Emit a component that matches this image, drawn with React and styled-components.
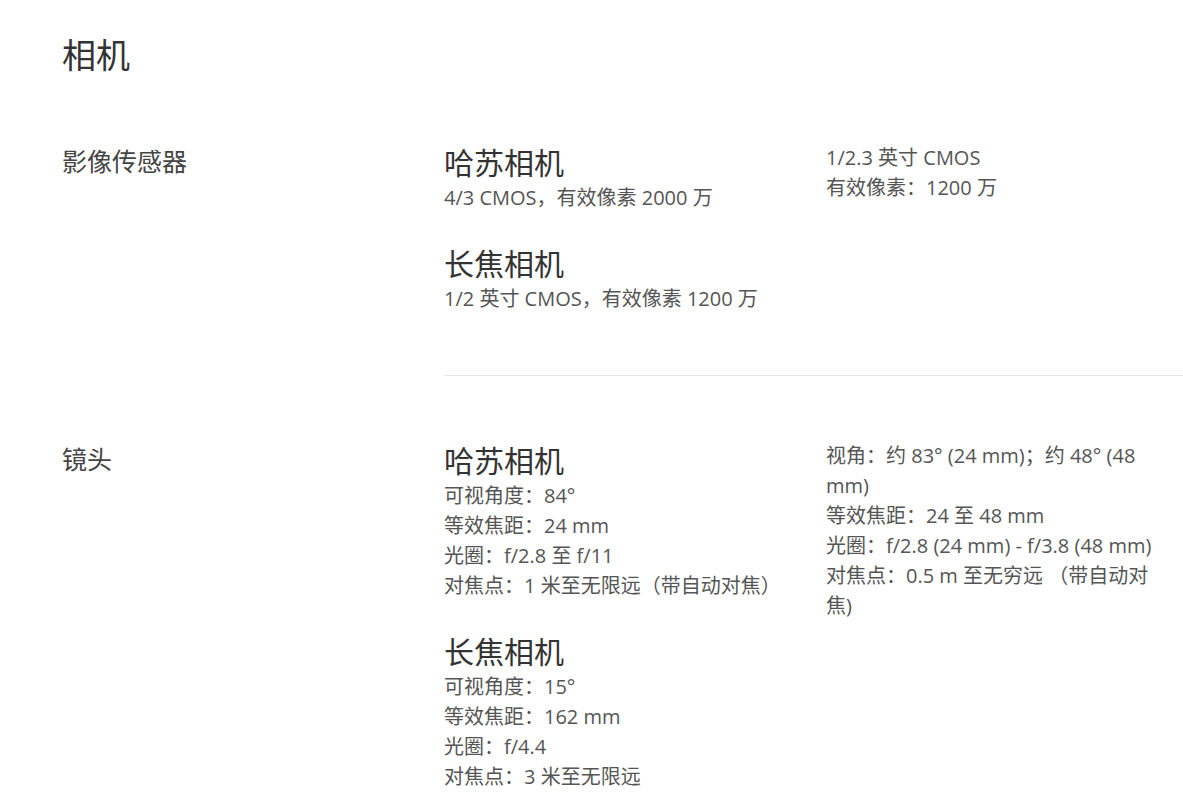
import React from 'react';
import styled, { createGlobalStyle } from 'styled-components';

const GlobalStyle = createGlobalStyle`
    html, body {
        margin: 0;
        padding: 0;
        background: #fff;
    }
    body {
        font-family: "Open Sans", "Noto Sans CJK SC", sans-serif;
        -webkit-font-smoothing: antialiased;
    }
`;

const Page = styled.div`
    padding: 32px 0 0 62px;
    color: #555;
`;

const Title = styled.h1`
    margin: 0 0 65px;
    font-size: 34px;
    line-height: 46px;
    font-weight: 400;
    color: #333;
`;

const Row = styled.section`
    display: flex;
    & + & {
        margin-top: 65px;
    }
`;

const Label = styled.h2`
    flex: 0 0 382px;
    margin: 0;
    font-size: 25px;
    line-height: 36px;
    font-weight: 400;
    color: #444;
`;

const Body = styled.div`
    flex: 1;
    display: flex;
    padding-bottom: ${(p) => (p.$last ? '0' : '61px')};
    border-bottom: ${(p) => (p.$last ? 'none' : '1px solid #e6e6e6')};
`;

const Column = styled.div`
    flex: 0 0 ${(p) => p.$width}px;
    display: flex;
    flex-direction: column;
    gap: 31px;
`;

const Block = styled.div``;

const Heading = styled.h3`
    margin: 0;
    font-size: 30px;
    line-height: 40px;
    font-weight: 400;
    color: #333;
`;

const Line = styled.p`
    margin: 0;
    font-size: 20px;
    line-height: 30px;
    color: #555;
`;

const specs = [
    {
        label: '影像传感器',
        main: [
            { title: '哈苏相机', lines: ['4/3 CMOS，有效像素 2000 万'] },
            { title: '长焦相机', lines: ['1/2 英寸 CMOS，有效像素 1200 万'] },
        ],
        side: ['1/2.3 英寸 CMOS', '有效像素：1200 万'],
    },
    {
        label: '镜头',
        main: [
            {
                title: '哈苏相机',
                lines: ['可视角度：84°', '等效焦距：24 mm', '光圈：f/2.8 至 f/11', '对焦点：1 米至无限远（带自动对焦）'],
            },
            {
                title: '长焦相机',
                lines: ['可视角度：15°', '等效焦距：162 mm', '光圈：f/4.4', '对焦点：3 米至无限远'],
            },
        ],
        side: [
            '视角：约 83° (24 mm)；约 48° (48 mm)',
            '等效焦距：24 至 48 mm',
            '光圈：f/2.8 (24 mm) - f/3.8 (48 mm)',
            '对焦点：0.5 m 至无穷远 （带自动对焦)',
        ],
    },
];

export default function App() {
    return (
        <>
            <GlobalStyle />
            <Page>
                <Title>相机</Title>
                {specs.map((s, i) => (
                    <Row key={s.label}>
                        <Label>{s.label}</Label>
                        <Body $last={i === specs.length - 1}>
                            <Column $width={382}>
                                {s.main.map((b) => (
                                    <Block key={b.title}>
                                        <Heading>{b.title}</Heading>
                                        {b.lines.map((l) => (
                                            <Line key={l}>{l}</Line>
                                        ))}
                                    </Block>
                                ))}
                            </Column>
                            <Column $width={340}>
                                <Block>
                                    {s.side.map((l) => (
                                        <Line key={l}>{l}</Line>
                                    ))}
                                </Block>
                            </Column>
                        </Body>
                    </Row>
                ))}
            </Page>
        </>
    );
}
